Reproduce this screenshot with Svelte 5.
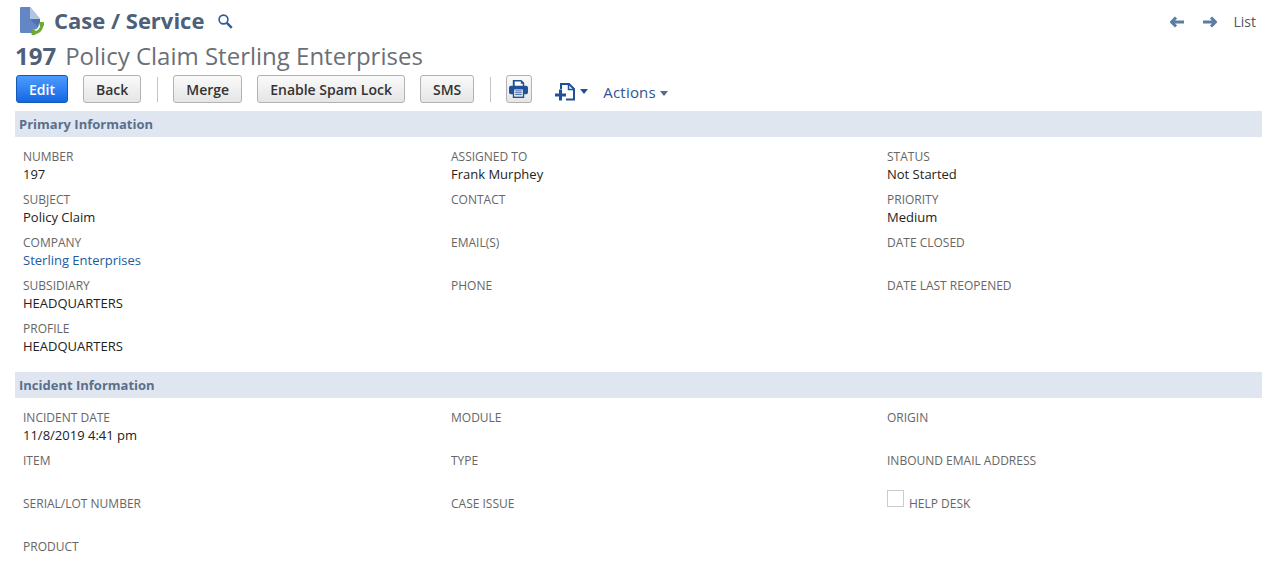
<script lang="ts">
  const primary = [
    [
      { label: 'NUMBER', value: '197' },
      { label: 'SUBJECT', value: 'Policy Claim' },
      { label: 'COMPANY', value: 'Sterling Enterprises', link: true },
      { label: 'SUBSIDIARY', value: 'HEADQUARTERS' },
      { label: 'PROFILE', value: 'HEADQUARTERS' }
    ],
    [
      { label: 'ASSIGNED TO', value: 'Frank Murphey' },
      { label: 'CONTACT' },
      { label: 'EMAIL(S)' },
      { label: 'PHONE' }
    ],
    [
      { label: 'STATUS', value: 'Not Started' },
      { label: 'PRIORITY', value: 'Medium' },
      { label: 'DATE CLOSED' },
      { label: 'DATE LAST REOPENED' }
    ]
  ];

  const incident = [
    [
      { label: 'INCIDENT DATE', value: '11/8/2019 4:41 pm' },
      { label: 'ITEM' },
      { label: 'SERIAL/LOT NUMBER' },
      { label: 'PRODUCT' }
    ],
    [{ label: 'MODULE' }, { label: 'TYPE' }, { label: 'CASE ISSUE' }],
    [{ label: 'ORIGIN' }, { label: 'INBOUND EMAIL ADDRESS' }, { label: 'HELP DESK', check: true }]
  ];
</script>

{#snippet fields(columns)}
  <div class="fields">
    {#each columns as col}
      <div class="col">
        {#each col as f}
          {#if f.check}
            <div class="field check-field">
              <span class="checkbox"></span>
              <span class="label">{f.label}</span>
            </div>
          {:else}
            <div class="field">
              <div class="label">{f.label}</div>
              <div class="value" class:link={f.link}>{f.value ?? ''}</div>
            </div>
          {/if}
        {/each}
      </div>
    {/each}
  </div>
{/snippet}

<div class="page">
  <header class="top">
    <svg class="logo" width="24" height="28" viewBox="0 0 24 28">
      <path d="M1 0h9l10 12v13l-3 1H1a1 1 0 0 1-1-1V1a1 1 0 0 1 1-1z" fill="#6387c4"/>
      <path d="M10 0l10 12H10z" fill="#b3c4e2"/>
      <path d="M10 12h10v10z" fill="#4f72ae"/>
      <path d="M13 25.500c5 1 9-3 9-9" fill="none" stroke="#fff" stroke-width="6"/>
      <path d="M13 25.500c5 1 9-3 9-9" fill="none" stroke="#6bab2f" stroke-width="3"/>
      <rect x="11.500" y="23" width="4" height="5" rx="1" fill="#6bab2f"/>
      <rect x="19.500" y="15" width="4.500" height="4" rx="1" fill="#6bab2f"/>
    </svg>
    <h1>Case / Service</h1>
    <svg class="search" width="15" height="15" viewBox="0 0 15 15" fill="none" stroke="#2b5a9b">
      <circle cx="5.500" cy="5.500" r="4.400" stroke-width="1.600"/>
      <path d="M8.800 8.800l5 5" stroke-width="2.400"/>
    </svg>
    <nav class="pager">
      <svg width="14" height="12" viewBox="0 0 14 12" fill="none" stroke="#5d7ca3" stroke-width="3" stroke-linejoin="round">
        <path d="M6 1.500L1.500 6 6 10.500M2 6h12"/>
      </svg>
      <svg width="14" height="12" viewBox="0 0 14 12" fill="none" stroke="#5d7ca3" stroke-width="3" stroke-linejoin="round">
        <path d="M8 1.500L12.500 6 8 10.500M12 6H0"/>
      </svg>
      <span>List</span>
    </nav>
  </header>

  <h2 class="record"><b>197</b><span>Policy Claim Sterling Enterprises</span></h2>

  <div class="toolbar">
    <button class="btn primary">Edit</button>
    <button class="btn">Back</button>
    <i class="sep"></i>
    <button class="btn">Merge</button>
    <button class="btn">Enable Spam Lock</button>
    <button class="btn">SMS</button>
    <i class="sep"></i>
    <button class="btn print" aria-label="Print">
      <svg width="19" height="18" viewBox="0 0 20 19">
        <path d="M4 7V0h9l3 3v4z" fill="#1f5199"/>
        <path d="M6 1.500h6.500V4H14.500v3H6z" fill="#fff"/>
        <rect x="0" y="6" width="20" height="9" rx="2" fill="#1f5199"/>
        <rect x="4" y="9" width="12" height="10" fill="#1f5199"/>
        <path d="M5.500 10h9v7.500h-9z" fill="#fff"/>
        <path d="M6.500 11.500h7M6.500 13.500h7M6.500 15.500h7" stroke="#1f5199" stroke-width="1"/>
      </svg>
    </button>
    <div class="new-menu">
      <svg width="20" height="18" viewBox="0 0 20 18" fill="none" stroke="#1f5199">
        <path d="M6 6V1h8l5 5v10.500h-8" stroke-width="2"/>
        <path d="M13.500 1v5.500H19" stroke-width="1.500"/>
        <path d="M0 12h11M5.500 6.500v11" stroke-width="3"/>
      </svg>
      <span class="caret blue"></span>
    </div>
    <div class="actions">Actions<span class="caret"></span></div>
  </div>

  <div class="band">Primary Information</div>
  {@render fields(primary)}

  <div class="band second">Incident Information</div>
  {@render fields(incident)}
</div>

<style>
  :global(body) {
    margin: 0;
    background: #fff;
    font-family: "Open Sans", sans-serif;
    font-size: 13px;
    color: #333;
  }

  .page {
    height: 568px;
    overflow: hidden;
  }

  .top {
    display: flex;
    align-items: center;
    height: 42px;
    padding: 0 6px 0 20px;
    margin-bottom: -1px;
  }

  .logo {
    margin-right: 10px;
  }

  h1 {
    margin: 0 14px 3px 0;
    font-size: 22px;
    font-weight: 700;
    color: #4d5f79;
  }

  .search {
    margin-top: 1px;
  }

  .pager {
    display: flex;
    align-items: center;
    margin-left: auto;
    font-size: 14px;
    color: #555;
  }

  .pager svg {
    margin: 1px 19px 0 0;
  }

  .pager svg + svg {
    margin-right: 16px;
  }

  .record {
    display: flex;
    gap: 9px;
    margin: 0;
    padding: 0 0 6px 15px;
    height: 28px;
    align-items: center;
    font-size: 24px;
    font-weight: 400;
    color: #6b6f76;
  }

  .record b {
    font-weight: 700;
    color: #4d5f79;
  }

  .toolbar {
    display: flex;
    align-items: center;
    height: 28px;
    padding-left: 16px;
    margin-bottom: 8px;
  }

  .btn {
    height: 28px;
    padding: 0 12px;
    margin-right: 15px;
    border: 1px solid #b2b2b2;
    border-radius: 3px;
    background: linear-gradient(#fafafa, #e5e5e5);
    font: 600 14px "Open Sans", sans-serif;
    color: #333;
  }

  .primary {
    width: 52px;
    padding: 0;
    border-color: #125ab2;
    background: linear-gradient(#4d9bff, #1467e4);
    color: #fff;
  }

  .sep {
    width: 1px;
    height: 25px;
    margin: 0 15px 0 1px;
    background: #c4c4c4;
  }

  .print {
    width: 26px;
    padding: 0 3px 0 1px;
    margin-right: 23px;
    display: flex;
    align-items: center;
    justify-content: center;
  }

  .new-menu {
    display: flex;
    align-items: center;
    gap: 5px;
    width: 48px;
    margin-top: 6px;
  }

  .new-menu .caret {
    margin-top: -2px;
  }

  .actions {
    display: flex;
    align-items: center;
    gap: 4px;
    margin-top: 6px;
    font-size: 15px;
    font-weight: 400;
    letter-spacing: 0.2px;
    color: #2c5596;
  }

  .actions .caret {
    margin-top: 2px;
  }

  .caret {
    width: 0;
    height: 0;
    border: 4px solid transparent;
    border-bottom-width: 0;
    border-top: 5px solid #5a6a85;
  }

  .caret.blue {
    border-top-color: #1f5199;
  }

  .band {
    height: 26px;
    margin-left: 15px;
    padding-left: 4px;
    line-height: 26px;
    background: #e0e6ef;
    font-size: 13px;
    font-weight: 700;
    color: #5a6f8d;
  }

  .second {
    margin-top: 9px;
  }

  .fields {
    display: grid;
    grid-template-columns: 428px 436px 1fr;
    padding: 11px 0 0 23px;
  }

  .field {
    height: 43px;
    line-height: 18px;
  }

  .label {
    font-size: 12px;
    color: #666;
  }

  .value {
    margin-top: -1px;
    font-size: 13px;
    color: #222;
  }

  .link {
    color: #255a9e;
  }

  .check-field {
    display: flex;
    align-items: flex-start;
    gap: 5px;
  }

  .checkbox {
    width: 15px;
    height: 15px;
    border: 1px solid #ccc;
    margin-top: -5px;
  }
</style>
